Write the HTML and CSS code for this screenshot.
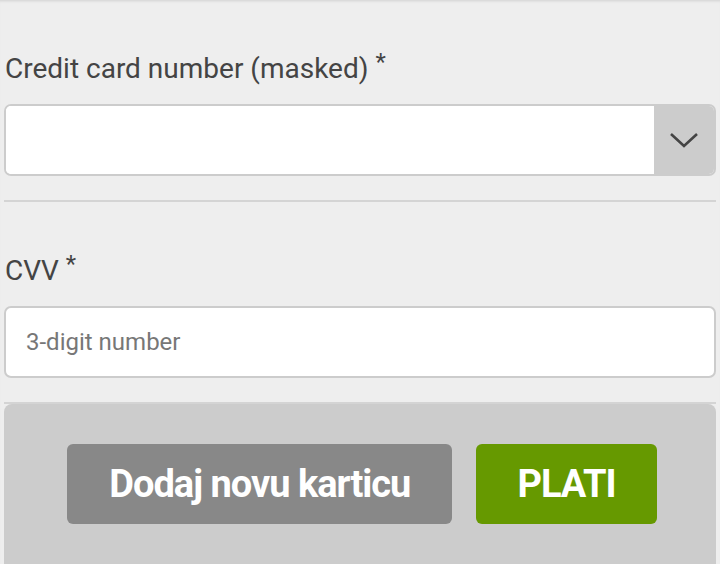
FILE: index.html
```html
<!DOCTYPE html>
<html lang="hr">
<head>
  <meta charset="UTF-8">
  <title>Plaćanje karticom</title>
  <link rel="stylesheet" href="styles.css">
</head>
<body>

  <div class="page">
    <div class="field">
      <label class="label" for="card">Credit card number (masked) <sup>*</sup></label>
      <div class="select">
        <select id="card"></select>
        <span class="arrow">
          <svg width="30" height="18" viewBox="0 0 30 18"><path d="M2 3 L15 15 L28 3" fill="none" stroke="#444" stroke-width="2.6"/></svg>
        </span>
      </div>
    </div>

    <hr class="sep">

    <div class="field cvv">
      <label class="label" for="cvv">CVV <sup>*</sup></label>
      <input id="cvv" class="input" type="text" placeholder="3-digit number">
    </div>

    <hr class="sep">

    <div class="actions">
      <button class="btn btn-gray">Dodaj novu karticu</button>
      <button class="btn btn-green">PLATI</button>
    </div>
  </div>

</body>
</html>
```

FILE: styles.css
```css
body {
  margin: 0;
  background-color: #eeeeee;
  font-family: Roboto, 'Liberation Sans', sans-serif;
  overflow: hidden;
}

.page {
  padding: 0 4px;
  box-shadow: inset 0 3px 3px -2px rgba(0, 0, 0, 0.12);
  min-height: 564px;
}

.field {
  padding-top: 52px;
}

.label {
  display: block;
  font-size: 28px;
  line-height: 34px;
  color: #444;
  margin-bottom: 18px;
  padding-left: 1px;
}

.label sup {
  font-size: 24px;
  vertical-align: baseline;
  position: relative;
  top: -8px;
  line-height: 0;
}

.select {
  display: flex;
  height: 72px;
  border: 2px solid #cccccc;
  border-radius: 7px;
  background-color: #fff;
  box-sizing: border-box;
  overflow: hidden;
}

.select select {
  flex: 1;
  border: none;
  background: #fff;
  appearance: none;
  outline: none;
}

.arrow {
  width: 60px;
  background-color: #cccccc;
  display: flex;
  align-items: center;
  justify-content: center;
}

.input {
  display: block;
  width: 100%;
  height: 72px;
  box-sizing: border-box;
  border: 2px solid #cccccc;
  border-radius: 7px;
  padding: 0 20px;
  font-family: Roboto, sans-serif;
  font-size: 24px;
  outline: none;
}

.input::placeholder {
  color: #777;
}

.sep {
  border: none;
  border-top: 2px solid #d4d4d4;
  margin: 24px 0 0;
}

.actions {
  background-color: #cccccc;
  border-radius: 8px 8px 0 0;
  padding: 40px 0 60px 4px;
  display: flex;
  justify-content: center;
  gap: 24px;
}

.btn {
  height: 80px;
  padding: 0 42px;
  border: none;
  border-radius: 6px;
  color: #fff;
  font-family: Roboto, sans-serif;
  font-size: 38px;
  font-weight: bold;
  letter-spacing: -1px;
  cursor: pointer;
}

.btn-gray {
  background-color: #888888;
}

.btn-green {
  background-color: #669900;
  padding: 0 41px;
}
```
